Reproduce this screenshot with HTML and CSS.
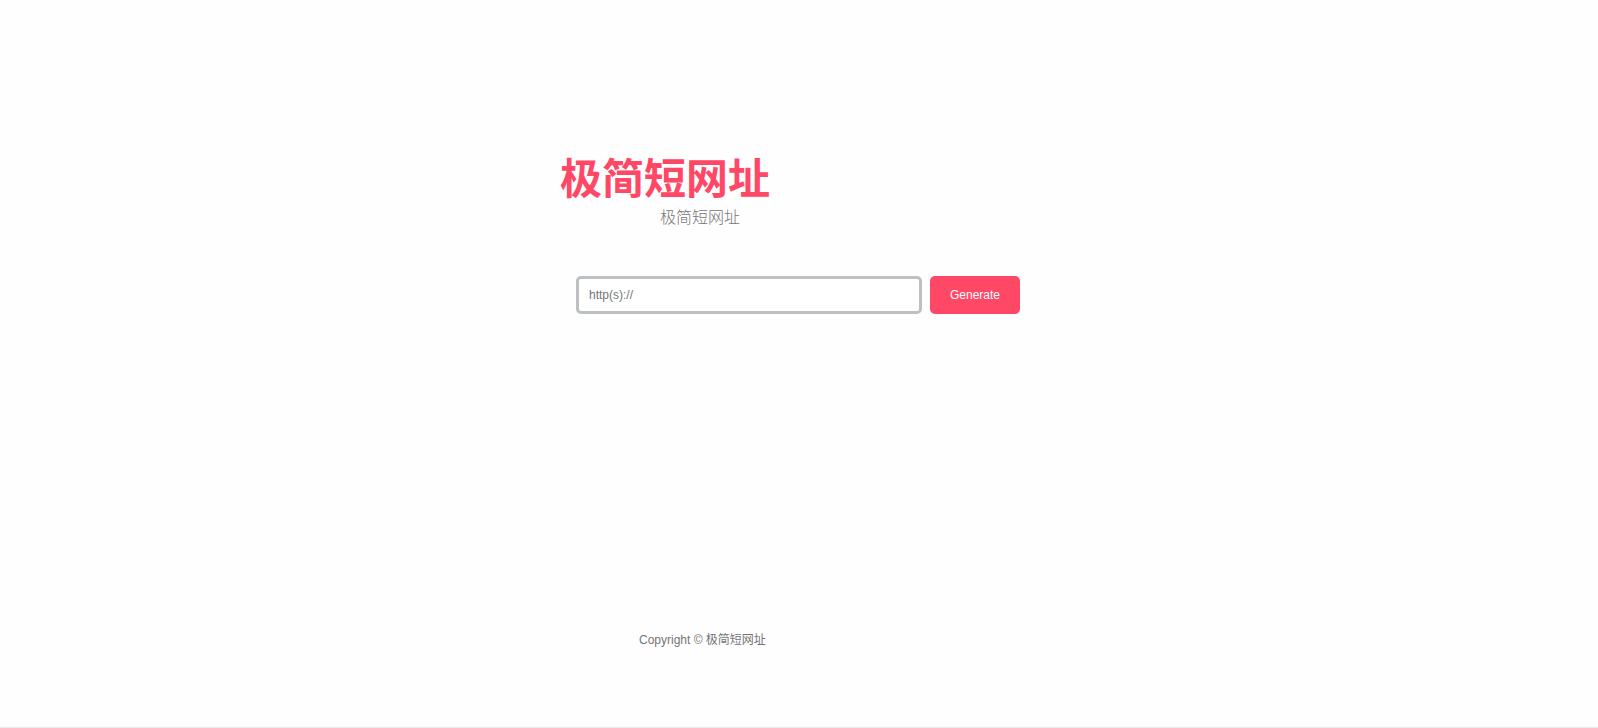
FILE: index.html
```html
<!DOCTYPE html>
<html lang="zh-CN">
<head>
    <meta charset="UTF-8">
    <meta name="viewport" content="width=device-width, initial-scale=1.0">
    <title>极简短网址</title>
    <link rel="stylesheet" href="styles.css">
</head>
<body>
<main class="container">
    <div class="header">
        <h1>极简短网址</h1>
        <p>极简短网址</p>
    </div>

    <form class="url-form">
        <input type="url" id="url" aria-label="URL" placeholder="http(s)://">
        <button type="button">Generate</button>
    </form>
</main>

<footer class="footer">Copyright © 极简短网址</footer>
</body>
</html>
```
FILE: styles.css
```css
* {
    margin: 0;
    padding: 0;
    box-sizing: border-box;
}

body {
    display: flex;
    flex-direction: column;
    align-items: center;
    min-height: 100vh;
    padding: 150px 16px 75px;
    border-bottom: 1px solid #e8e8e8;
    background: #fefefe;
    color: #757575;
    font-family: "Liberation Sans", "Noto Sans CJK SC", sans-serif;
    font-size: 12px;
}

.container {
    width: 100%;
    max-width: 478px;
}

.header {
    width: 210px;
}

h1 {
    color: #ff4766;
    font-size: 42px;
    line-height: 60px;
    white-space: nowrap;
}

.header p {
    padding-right: 30px;
    font-size: 16px;
    font-weight: 300;
    line-height: 16px;
    text-align: right;
}

.url-form {
    display: flex;
    gap: 8px;
    margin-top: 50px;
    padding: 0 18px 0 16px;
}

input {
    flex: 1;
    min-width: 0;
    height: 38px;
    padding: 0 10px;
    border: 3px solid #bdc0c3;
    border-radius: 5px;
    background: #fff;
    font-family: inherit;
    font-size: 12px;
}

input::placeholder {
    color: #757575;
}

button {
    width: 90px;
    height: 38px;
    border: none;
    border-radius: 5px;
    background: #ff4766;
    color: #fff;
    font-family: inherit;
    font-size: 12px;
    cursor: pointer;
}

.footer {
    width: 100%;
    max-width: 320px;
    margin-top: auto;
    line-height: 24px;
}
```
